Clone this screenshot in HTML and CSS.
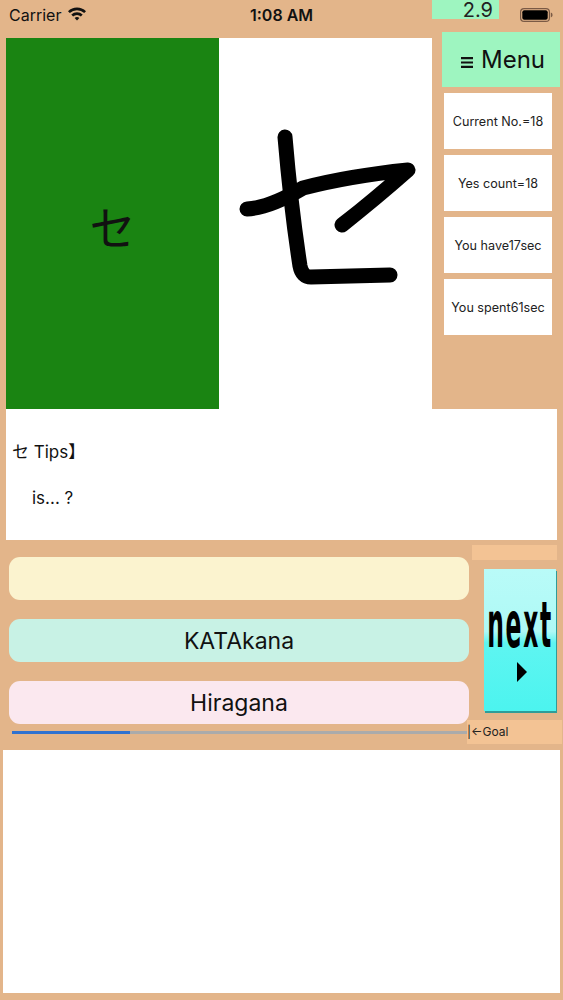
FILE: index.html
```html
<!DOCTYPE html>
<html lang="ja">
<head>
<meta charset="utf-8">
<title>Katakana</title>
<link rel="stylesheet" href="styles.css">
</head>
<body>
<div class="screen">
  <header class="status">
    <div class="st-left">
      <span class="carrier">Carrier</span>
      <svg class="wifi" width="20" height="15" viewBox="0 0 20 15">
        <path d="M1 5.2 A13 13 0 0 1 19 5.2 L17.2 7.1 A10.4 10.4 0 0 0 2.8 7.1 Z" fill="#111"/>
        <path d="M4.3 8.6 A8.3 8.3 0 0 1 15.7 8.6 L13.9 10.5 A5.7 5.7 0 0 0 6.1 10.5 Z" fill="#111"/>
        <path d="M7.6 12 A3.6 3.6 0 0 1 12.4 12 L10 14.6 Z" fill="#111"/>
      </svg>
    </div>
    <div class="st-time">1:08 AM</div>
    <div class="st-right">
      <span class="score">2.9</span>
      <svg class="battery" width="33" height="14" viewBox="0 0 33 14">
        <rect x="0.6" y="0.6" width="28.8" height="12.8" rx="3.5" fill="none" stroke="#7a5a45" stroke-width="1.2"/>
        <rect x="2.3" y="2.3" width="25.4" height="9.4" rx="2" fill="#000"/>
        <path d="M30.8 4.6 Q32.6 5 32.6 7 Q32.6 9 30.8 9.4 Z" fill="#7a5a45"/>
      </svg>
    </div>
  </header>

  <section class="top">
    <div class="card">
      <div class="card-left"><span class="kana">セ</span></div>
      <div class="card-right">
        <svg class="stroke" width="213" height="371" viewBox="0 0 213 371">
          <path d="M66 99 Q72 170 81 228 Q83 239 92 239 L171 237" fill="none" stroke="#000" stroke-width="15" stroke-linecap="round" stroke-linejoin="round"/>
          <path d="M28 171 Q50 170 84 150 Q130 138 189 132 Q155 162 123 187" fill="none" stroke="#000" stroke-width="15" stroke-linecap="round" stroke-linejoin="round"/>
        </svg>
      </div>
    </div>
    <aside class="side">
      <div class="menu">
        <svg class="ham" width="12" height="11" viewBox="0 0 12 11">
          <path d="M0 1.2 H12 M0 5.5 H12 M0 9.8 H12" stroke="#111" stroke-width="2.2"/>
        </svg>
        <span>Menu</span>
      </div>
      <div class="stat">Current No.=18</div>
      <div class="stat">Yes count=18</div>
      <div class="stat">You have17sec</div>
      <div class="stat">You spent61sec</div>
    </aside>
  </section>

  <section class="tips">
    <p class="tips-title">セ Tips】</p>
    <p class="tips-body">is... ?</p>
  </section>

  <section class="answers">
    <div class="answer-main">
      <div class="choices">
        <div class="choice choice-yellow"></div>
        <div class="choice choice-green">KATAkana</div>
        <div class="choice choice-pink">Hiragana</div>
      </div>
      <div class="next-col">
        <div class="strip"></div>
        <div class="next">
          <span class="next-label">next</span>
          <svg class="next-arrow" width="10" height="20" viewBox="0 0 10 20">
            <path d="M0 0 L10 10 L0 20 Z" fill="#000"/>
          </svg>
        </div>
      </div>
    </div>
    <div class="progress-row">
      <div class="bar"><div class="bar-fill" style="width: 118px"></div></div>
      <div class="goal">|←Goal</div>
    </div>
  </section>

  <section class="pad"></section>
</div>
</body>
</html>
```

FILE: styles.css
```css
* { box-sizing: border-box; }

html, body {
  margin: 0;
  padding: 0;
}

body {
  background: #e3b58a;
  font-family: Inter, "Noto Sans", "Noto Sans CJK JP", sans-serif;
  color: #111;
}

.screen {
  width: 563px;
  height: 1000px;
  display: flex;
  flex-direction: column;
}

/* status bar */
.status {
  height: 30px;
  display: grid;
  grid-template-columns: 1fr auto 1fr;
  align-items: start;
}

.st-left {
  display: flex;
  align-items: center;
  gap: 6px;
  padding-left: 9px;
  height: 29px;
  font-size: 16px;
}

.wifi { margin-top: -2px; }

.st-time {
  height: 29px;
  display: flex;
  align-items: center;
  font-size: 16px;
  font-weight: 600;
}

.st-right {
  display: flex;
  justify-content: flex-end;
  align-items: flex-start;
  padding-right: 10px;
}

.score {
  display: block;
  width: 67px;
  height: 19px;
  background: #9ef5c0;
  text-align: right;
  padding-right: 6px;
  font-size: 20px;
  line-height: 21px;
  color: #222;
}

.battery {
  margin-left: 21px;
  margin-top: 8px;
}

/* top area */
.top {
  display: flex;
  height: 379px;
  padding-left: 6px;
}

.card {
  margin-top: 8px;
  width: 426px;
  height: 371px;
  display: flex;
}

.card-left {
  width: 213px;
  height: 100%;
  background: #1a8412;
  display: flex;
  align-items: center;
  justify-content: center;
}

.kana {
  font-family: "Noto Sans CJK JP", sans-serif;
  font-size: 46px;
  color: #111;
  margin-top: 2px;
}

.card-right {
  width: 213px;
  height: 100%;
  background: #fff;
}

.stroke { display: block; }

.side {
  margin-left: 10px;
  margin-top: 2px;
  width: 118px;
  display: flex;
  flex-direction: column;
  gap: 6px;
}

.menu {
  height: 55px;
  background: #9ef5c0;
  display: flex;
  align-items: center;
  justify-content: center;
  gap: 8px;
  font-size: 24px;
  color: #111;
  padding-left: 4px;
}

.ham { margin-top: 5px; }

.stat {
  margin-left: 2px;
  width: 108px;
  height: 56px;
  background: #fff;
  display: flex;
  align-items: center;
  justify-content: center;
  font-size: 12.6px;
  color: #222;
  white-space: nowrap;
}

/* tips */
.tips {
  margin-left: 6px;
  width: 551px;
  height: 131px;
  background: #fff;
  padding-top: 32px;
}

.tips p {
  margin: 0;
  font-size: 17px;
  line-height: 22px;
}

.tips-title {
  padding-left: 6px;
  font-family: Inter, "Noto Sans CJK JP", sans-serif;
}

.tips-body {
  padding-left: 26px;
  margin-top: 24px !important;
}

/* answers */
.answers {
  display: flex;
  flex-direction: column;
}

.answer-main {
  display: flex;
  padding-left: 9px;
}

.choices {
  width: 460px;
  padding-top: 17px;
  display: flex;
  flex-direction: column;
  gap: 19px;
}

.choice {
  height: 43px;
  border-radius: 11px;
  display: flex;
  align-items: center;
  justify-content: center;
  font-size: 23px;
  color: #111;
}

.choice-yellow { background: #fbf3cf; }
.choice-green { background: #c8f2e5; }
.choice-pink { background: #fbe8ef; }

.next-col {
  display: flex;
  flex-direction: column;
}

.strip {
  margin-top: 5px;
  margin-left: 3px;
  width: 85px;
  height: 15px;
  background: #f3c394;
}

.next {
  margin-top: 9px;
  margin-left: 15px;
  width: 72px;
  height: 142px;
  background: linear-gradient(#b9fbf8 0%, #aef9f6 44%, #5ef5f1 52%, #4cf4ef 100%);
  box-shadow: 1px 2px 0 #2f9c98;
  display: flex;
  flex-direction: column;
  align-items: center;
}

.next-label {
  display: block;
  margin-top: 45px;
  font-family: "DejaVu Sans", sans-serif;
  font-stretch: condensed;
  font-weight: bold;
  font-size: 31px;
  line-height: 20px;
  height: 20px;
  letter-spacing: 2px;
  transform: scale(0.84, 2.05);
  color: #000;
}

.next-arrow {
  display: block;
  margin-top: 28px;
  margin-left: 4px;
}

.progress-row {
  display: flex;
  margin-top: -4px;
  height: 24px;
}

.bar {
  margin-left: 12px;
  margin-top: 11px;
  width: 455px;
  height: 3px;
  background: #ababab;
}

.bar-fill {
  height: 3px;
  background: #2f72d0;
}

.goal {
  width: 95px;
  height: 24px;
  background: #f3c394;
  font-size: 12px;
  line-height: 24px;
  color: #222;
  white-space: nowrap;
}

/* bottom pad */
.pad {
  margin-top: 6px;
  margin-left: 3px;
  width: 557px;
  height: 243px;
  background: #fff;
}
```
